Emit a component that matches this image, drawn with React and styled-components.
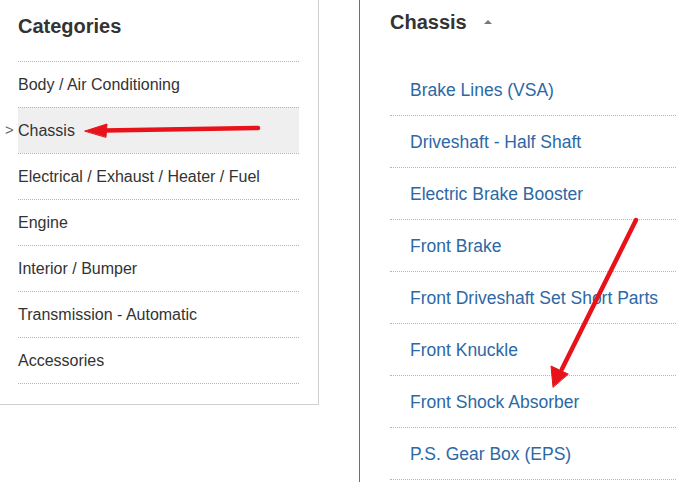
import styled, { createGlobalStyle } from 'styled-components';

const GlobalStyle = createGlobalStyle`
  html, body {
    margin: 0;
    padding: 0;
    background: #fff;
    font-family: "Liberation Sans", Arial, sans-serif;
    color: #333;
  }
`;

const Page = styled.div`
  position: relative;
  display: flex;
  align-items: flex-start;
  width: 676px;
  height: 482px;
  overflow: hidden;
`;

const Sidebar = styled.aside`
  flex: none;
  width: 281px;
  padding: 0 19px 20px 18px;
  border-right: 1px solid #cfcfcf;
  border-bottom: 1px solid #cfcfcf;
`;

const SideTitle = styled.h3`
  margin: 14px 0 23px;
  font-size: 20px;
  line-height: 24px;
  font-weight: bold;
  color: #333;
`;

const CatList = styled.ul`
  list-style: none;
  margin: 0;
  padding: 0;
  border-bottom: 1px dotted #b5b5b5;
`;

const CatItem = styled.li`
  position: relative;
  height: 45px;
  line-height: 45px;
  border-top: 1px dotted #b5b5b5;
  font-size: 16px;
  color: #333;
  white-space: nowrap;
  background: ${(p) => (p.$active ? '#efefef' : 'transparent')};

  &::before {
    content: ${(p) => (p.$active ? "'>'" : 'none')};
    position: absolute;
    left: -13px;
    top: -1px;
    color: #666;
    font-size: 15px;
  }
`;

const Content = styled.section`
  flex: 1;
  min-width: 0;
  align-self: stretch;
  margin-left: 40px;
  padding-left: 30px;
  border-left: 1px solid #c3465e;
  overflow: hidden;
`;

const HeadRow = styled.div`
  display: flex;
  align-items: center;
  gap: 17px;
  margin: 10px 0 30px;
`;

const Heading = styled.h2`
  margin: 0;
  font-size: 20px;
  line-height: 24px;
  font-weight: bold;
  color: #333;
`;

const Caret = styled.span`
  width: 0;
  height: 0;
  border-left: 4px solid transparent;
  border-right: 4px solid transparent;
  border-bottom: 4px solid #777;
`;

const PartList = styled.ul`
  list-style: none;
  margin: 0;
  padding: 0;
`;

const PartItem = styled.li`
  height: 51px;
  line-height: 52px;
  padding-left: 20px;
  border-bottom: 1px dotted #b5b5b5;
  white-space: nowrap;
`;

const PartLink = styled.a`
  font-size: 17.5px;
  color: #2c68a6;
  text-decoration: none;
`;

const Annotations = styled.svg`
  position: absolute;
  left: 0;
  top: 0;
  pointer-events: none;
`;

const categories = [
  'Body / Air Conditioning',
  'Chassis',
  'Electrical / Exhaust / Heater / Fuel',
  'Engine',
  'Interior / Bumper',
  'Transmission - Automatic',
  'Accessories',
];

const parts = [
  'Brake Lines (VSA)',
  'Driveshaft - Half Shaft',
  'Electric Brake Booster',
  'Front Brake',
  'Front Driveshaft Set Short Parts',
  'Front Knuckle',
  'Front Shock Absorber',
  'P.S. Gear Box (EPS)',
];

const App = () => (
  <>
    <GlobalStyle />
    <Page>
      <Sidebar>
        <SideTitle>Categories</SideTitle>
        <CatList>
          {categories.map((c) => (
            <CatItem key={c} $active={c === 'Chassis'}>
              {c}
            </CatItem>
          ))}
        </CatList>
      </Sidebar>
      <Content>
        <HeadRow>
          <Heading>Chassis</Heading>
          <Caret />
        </HeadRow>
        <PartList>
          {parts.map((p) => (
            <PartItem key={p}>
              <PartLink href='#'>{p}</PartLink>
            </PartItem>
          ))}
        </PartList>
      </Content>
      <Annotations width='676' height='482' viewBox='0 0 676 482'>
        <g fill='#e8121a' stroke='#e8121a' strokeLinecap='round'>
          <line x1='258' y1='128' x2='104' y2='130.5' strokeWidth='4.5' />
          <polygon points='85,131 107,124 106,137' strokeWidth='1' strokeLinejoin='round' />
          <line x1='636' y1='220' x2='562' y2='369' strokeWidth='4.5' />
          <polygon points='553,387 551,366 568,374' strokeWidth='1' strokeLinejoin='round' />
        </g>
      </Annotations>
    </Page>
  </>
);

export default App;
